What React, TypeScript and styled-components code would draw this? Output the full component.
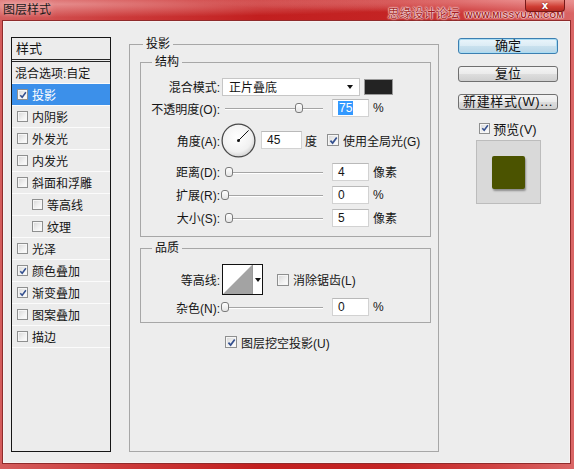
import React from 'react';
import styled, { createGlobalStyle, css } from 'styled-components';

const FONT = `"Liberation Sans", "Noto Sans CJK SC", sans-serif`;

const GlobalStyle = createGlobalStyle`
  html, body {
    margin: 0;
    padding: 0;
    background: #c62828;
  }
  body {
    font-family: ${FONT};
    color: #151515;
  }
  * {
    box-sizing: border-box;
  }
`;

interface Effect {
  name: string;
  checked?: boolean;
  selected?: boolean;
  sub?: boolean;
}

const effects: Effect[] = [
  { name: '投影', checked: true, selected: true },
  { name: '内阴影' },
  { name: '外发光' },
  { name: '内发光' },
  { name: '斜面和浮雕' },
  { name: '等高线', sub: true },
  { name: '纹理', sub: true },
  { name: '光泽' },
  { name: '颜色叠加', checked: true },
  { name: '渐变叠加', checked: true },
  { name: '图案叠加' },
  { name: '描边' },
];

const Check = ({ checked, size = 11 }: { checked?: boolean; size?: number }) => (
  <CheckBox $size={size}>
    {checked && (
      <svg width={size - 3} height={size - 3} viewBox="0 0 10 10">
        <path d="M1.6 5.2 L4 7.9 L8.6 1.6" stroke="#34508f" strokeWidth="1.9" fill="none" />
      </svg>
    )}
  </CheckBox>
);

const Slider = ({ pos }: { pos: number }) => (
  <Track>
    <Knob $pos={pos} />
  </Track>
);

const AngleDial = () => (
  <Dial width="35" height="35" viewBox="0 0 35 35">
    <defs>
      <radialGradient id="dialFill" cx="45%" cy="40%" r="60%">
        <stop offset="0%" stopColor="#ffffff" />
        <stop offset="75%" stopColor="#f1f1f1" />
        <stop offset="100%" stopColor="#d4d4d4" />
      </radialGradient>
    </defs>
    <circle cx="17.5" cy="17.5" r="16.4" fill="url(#dialFill)" stroke="#4a4a4a" strokeWidth="1.3" />
    <line x1="17.5" y1="17.5" x2="27.6" y2="7.4" stroke="#111" strokeWidth="1" />
    <circle cx="17.5" cy="17.5" r="1.5" fill="#111" />
  </Dial>
);

const ContourPicker = () => (
  <Contour>
    <svg width="29" height="29" viewBox="0 0 29 29">
      <rect width="29" height="29" fill="#fff" />
      <polygon points="0,29 29,0 29,29" fill="#a3a3a3" />
    </svg>
    <ContourArrow>
      <Caret />
    </ContourArrow>
  </Contour>
);

export default function App() {
  return (
    <>
      <GlobalStyle />
      <Window>
        <TitleBar>
          <TitleText>图层样式</TitleText>
          <Watermark>
            <span>思缘设计论坛</span>
            <WatermarkUrl>WWW.MISSYUAN.COM</WatermarkUrl>
          </Watermark>
          <CloseButton>x</CloseButton>
        </TitleBar>

        <Body>
          <StyleList>
            <ListHeader>样式</ListHeader>
            <ListItem $indent={3}>混合选项:自定</ListItem>
            {effects.map((e) => (
              <ListItem key={e.name} $indent={e.sub ? 20 : 5} $selected={e.selected}>
                <Check checked={e.checked} size={11} />
                {e.name}
              </ListItem>
            ))}
          </StyleList>

          <Group $width={310} $pad="0 7px 0 10px">
            <Legend $ml={3}>投影</Legend>

            <Group $pad="8px 0 7px 0" $mt={4}>
              <Legend $ml={11}>结构</Legend>
              <Row $h={19}>
                <Label>混合模式:</Label>
                <Select>
                  <span>正片叠底</span>
                  <Caret />
                </Select>
                <Swatch />
              </Row>
              <Row $h={24}>
                <Label>不透明度(O):</Label>
                <Slider pos={75} />
                <Field $w={37} $ml={9}>
                  <Selected>75</Selected>
                </Field>
                <Unit>%</Unit>
              </Row>
              <Row $h={40}>
                <Label>角度(A):</Label>
                <AngleDial />
                <Field $w={41} $ml={5}>45</Field>
                <Unit $ml={3}>度</Unit>
                <Toggle $ml={10}>
                  <Check checked size={12} />
                  使用全局光(G)
                </Toggle>
              </Row>
              <Row $h={23}>
                <Label>距离(D):</Label>
                <Slider pos={4} />
                <Field $w={37} $ml={9}>4</Field>
                <Unit>像素</Unit>
              </Row>
              <Row $h={23}>
                <Label>扩展(R):</Label>
                <Slider pos={0} />
                <Field $w={37} $ml={9}>0</Field>
                <Unit>%</Unit>
              </Row>
              <Row $h={23}>
                <Label>大小(S):</Label>
                <Slider pos={4} />
                <Field $w={37} $ml={9}>5</Field>
                <Unit>像素</Unit>
              </Row>
            </Group>

            <Group $pad="8px 0 4px 0" $mt={4}>
              <Legend $ml={11}>品质</Legend>
              <Row $h={33}>
                <Label>等高线:</Label>
                <ContourPicker />
                <Toggle $ml={14}>
                  <Check size={12} />
                  消除锯齿(L)
                </Toggle>
              </Row>
              <Row $h={22}>
                <Label>杂色(N):</Label>
                <Slider pos={0} />
                <Field $w={37} $ml={9}>0</Field>
                <Unit>%</Unit>
              </Row>
            </Group>

            <KnockoutRow>
              <Toggle>
                <Check checked size={12} />
                图层挖空投影(U)
              </Toggle>
            </KnockoutRow>
          </Group>

          <SideColumn>
            <Button $primary>确定</Button>
            <Button>复位</Button>
            <Button $wide>新建样式(W)...</Button>
            <PreviewToggle>
              <Check checked size={11} />
              预览(V)
            </PreviewToggle>
            <PreviewBox>
              <PreviewSwatch />
            </PreviewBox>
          </SideColumn>
        </Body>
      </Window>
    </>
  );
}

const Window = styled.div`
  width: 574px;
  height: 469px;
  display: flex;
  flex-direction: column;
  overflow: hidden;
  background: linear-gradient(
    90deg,
    #d45c5c 0%,
    #cc3b3b 20%,
    #c21f1f 45%,
    #c42424 68%,
    #d04343 86%,
    #da6666 100%
  );
`;

const TitleBar = styled.div`
  position: relative;
  height: 21px;
  flex: none;
  display: flex;
  align-items: flex-start;
  padding-left: 3px;
  background: radial-gradient(ellipse at 10% 20%, rgba(255, 215, 215, 0.45), transparent 55%),
    radial-gradient(ellipse at 92% 0%, rgba(255, 200, 200, 0.5), transparent 45%);
`;

const TitleText = styled.span`
  margin-top: 3px;
  font-size: 12px;
  line-height: 14px;
  color: #1b1b1b;
  text-shadow: 0 0 6px rgba(255, 255, 255, 0.6);
`;

const Watermark = styled.div`
  position: absolute;
  right: 10px;
  top: 8px;
  display: flex;
  align-items: baseline;
  gap: 5px;
  color: #a51f24;
  font-size: 12px;
  line-height: 13px;
  text-shadow: 0 0 1px #fff, 0 0 2px #fff, 0 0 2px #fff;
`;

const WatermarkUrl = styled.span`
  font-size: 8.5px;
  font-weight: bold;
  letter-spacing: 0.4px;
`;

const CloseButton = styled.div`
  position: relative;
  z-index: 1;
  margin-left: auto;
  margin-right: 9px;
  width: 40px;
  height: 12px;
  border: 1px solid #761818;
  border-top: none;
  border-radius: 0 0 4px 4px;
  background: linear-gradient(#e98a80, #cf3d33 60%, #b52a22);
  color: #fff;
  font-family: "DejaVu Sans", sans-serif;
  font-weight: bold;
  font-size: 10px;
  line-height: 11px;
  text-align: center;
  text-shadow: 0 0 2px #6b0f0f;
`;

const Body = styled.div`
  flex: 1;
  margin: 0 4px 6px 3px;
  display: flex;
  padding: 15px 11px 10px 7px;
  background: #ededed;
  border: 1px solid #f8f2f2;
  box-shadow: 0 0 0 1px #8f2b2b;
`;

const StyleList = styled.div`
  width: 100px;
  flex: none;
  margin-right: 18px;
  display: flex;
  flex-direction: column;
  border: 1px solid #161616;
  background: #ececec;
`;

const ListHeader = styled.div`
  height: 24px;
  flex: none;
  padding-left: 4px;
  font-size: 13px;
  line-height: 21px;
  border-bottom: 3px double #262626;
`;

const ListItem = styled.div<{ $indent: number; $selected?: boolean }>`
  height: 22px;
  flex: none;
  display: flex;
  align-items: center;
  gap: 4px;
  padding-left: ${(p) => p.$indent}px;
  font-size: 12px;
  white-space: nowrap;
  border-bottom: 1px solid #fbfbfb;
  ${(p) =>
    p.$selected &&
    css`
      background: #3c90ea;
      color: #fff;
    `}
`;

const CheckBox = styled.span<{ $size: number }>`
  width: ${(p) => p.$size}px;
  height: ${(p) => p.$size}px;
  flex: none;
  display: inline-flex;
  align-items: center;
  justify-content: center;
  border: 1px solid #8e8f8f;
  background: linear-gradient(135deg, #d6d6d6 0%, #f0f0f0 55%, #ffffff 100%);
  box-shadow: inset 0 0 0 1px #f6f6f6;
`;

const Group = styled.fieldset<{ $width?: number; $pad: string; $mt?: number }>`
  margin: ${(p) => p.$mt ?? 0}px 0 0 0;
  padding: ${(p) => p.$pad};
  min-width: 0;
  ${(p) =>
    p.$width &&
    css`
      width: ${p.$width}px;
      flex: none;
      margin-right: 19px;
    `}
  border: 1px solid #a7a7a7;
`;

const Legend = styled.legend<{ $ml: number }>`
  margin-left: ${(p) => p.$ml}px;
  padding: 0 3px;
  font-size: 12px;
  line-height: 14px;
  color: #111;
`;

const Row = styled.div<{ $h: number }>`
  height: ${(p) => p.$h}px;
  display: flex;
  align-items: center;
  font-size: 12px;
  white-space: nowrap;
`;

const Label = styled.span`
  width: 79px;
  flex: none;
  text-align: right;
`;

const Select = styled.div`
  width: 138px;
  height: 18px;
  margin-left: 2px;
  display: flex;
  align-items: center;
  justify-content: space-between;
  padding: 0 6px 0 6px;
  background: #fff;
  border: 1px solid #c6c6c6;
`;

const Caret = styled.span`
  width: 0;
  height: 0;
  border-left: 3.5px solid transparent;
  border-right: 3.5px solid transparent;
  border-top: 4px solid #111;
`;

const Swatch = styled.span`
  width: 29px;
  height: 16px;
  margin-left: 4px;
  background: #232323;
  border: 1px solid #9a9a9a;
`;

const Track = styled.div`
  position: relative;
  width: 98px;
  height: 12px;
  flex: none;
  margin-left: 5px;

  &::before {
    content: '';
    position: absolute;
    left: 0;
    right: 0;
    top: 6px;
    height: 1px;
    background: #a5a5a5;
    box-shadow: 0 1px 0 #fff;
  }
`;

const Knob = styled.span<{ $pos: number }>`
  position: absolute;
  top: 1px;
  left: calc(${(p) => p.$pos}% - 4px);
  width: 8px;
  height: 10px;
  border: 1px solid #7a7a7a;
  border-radius: 3px;
  background: linear-gradient(#ffffff, #e4e4e4);
`;

const Field = styled.div<{ $w: number; $ml: number }>`
  width: ${(p) => p.$w}px;
  height: 18px;
  flex: none;
  margin-left: ${(p) => p.$ml}px;
  display: flex;
  align-items: center;
  padding-left: 5px;
  background: #fff;
  border: 1px solid #d2d2d2;
  border-top-color: #b9b9b9;
  font-size: 12px;
`;

const Selected = styled.span`
  background: #3399ff;
  color: #fff;
  padding: 0 1px;
  line-height: 14px;
`;

const Unit = styled.span<{ $ml?: number }>`
  margin-left: ${(p) => p.$ml ?? 4}px;
`;

const Dial = styled.svg`
  flex: none;
  margin-left: 1px;
`;

const Toggle = styled.span<{ $ml?: number }>`
  display: inline-flex;
  align-items: center;
  gap: 4px;
  margin-left: ${(p) => p.$ml ?? 0}px;
  font-size: 12px;
  white-space: nowrap;
`;

const Contour = styled.div`
  width: 41px;
  height: 31px;
  flex: none;
  margin-left: 2px;
  display: flex;
  border: 1px solid #111;
  background: #fff;
`;

const ContourArrow = styled.div`
  flex: 1;
  display: flex;
  align-items: center;
  justify-content: center;
  border-left: 1px solid #9a9a9a;
  background: #fff;
`;

const KnockoutRow = styled.div`
  height: 18px;
  margin-top: 10px;
  padding-left: 85px;
  display: flex;
  align-items: center;
`;

const SideColumn = styled.div`
  width: 100px;
  flex: none;
  display: flex;
  flex-direction: column;
  align-items: center;
`;

const Button = styled.button<{ $primary?: boolean; $wide?: boolean }>`
  width: 100px;
  height: 16px;
  flex: none;
  margin-top: 12px;
  padding: 0;
  border: 1px solid #707070;
  border-radius: 3px;
  background: linear-gradient(#f4f4f4 0%, #ebebeb 48%, #dddddd 52%, #cfcfcf 100%);
  font-family: ${FONT};
  font-size: 13px;
  line-height: 14px;
  color: #111;
  letter-spacing: ${(p) => (p.$wide ? '0.6px' : '0')};

  &:first-child {
    margin-top: 1px;
  }

  ${(p) =>
    p.$primary &&
    css`
      border-color: #3c7fb1;
      background: linear-gradient(#eaf5fb 0%, #dcecf5 48%, #c9e1ee 52%, #b8d6e8 100%);
      box-shadow: inset 0 0 0 1px #a9dcf3;
    `}
`;

const PreviewToggle = styled.div`
  height: 16px;
  margin-top: 10px;
  display: flex;
  align-items: center;
  gap: 3px;
  font-size: 13px;
`;

const PreviewBox = styled.div`
  width: 65px;
  height: 64px;
  margin-top: 4px;
  display: flex;
  align-items: center;
  justify-content: center;
  background: #d9d9d9;
  border: 1px solid #bcbcbc;
`;

const PreviewSwatch = styled.div`
  width: 33px;
  height: 33px;
  border-radius: 2px;
  background: #4b5300;
  box-shadow: 1px 2px 2px rgba(0, 0, 0, 0.35);
`;
